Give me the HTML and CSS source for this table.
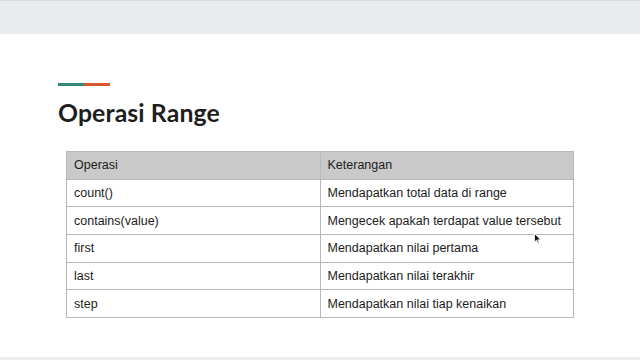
FILE: index.html
```html
<!DOCTYPE html>
<html>
<head>
<meta charset="utf-8">
<link rel="stylesheet" href="styles.css">
</head>
<body>
<div class="topbar"></div>
<main class="slide">
  <div class="accent"><span class="teal"></span><span class="orange"></span></div>
  <h1 class="title">Operasi Range</h1>
  <table class="ops">
    <thead>
      <tr><th>Operasi</th><th>Keterangan</th></tr>
    </thead>
    <tbody>
      <tr><td>count()</td><td>Mendapatkan total data di range</td></tr>
      <tr><td>contains(value)</td><td>Mengecek apakah terdapat value tersebut</td></tr>
      <tr><td>first</td><td>Mendapatkan nilai pertama</td></tr>
      <tr><td>last</td><td>Mendapatkan nilai terakhir</td></tr>
      <tr><td>step</td><td>Mendapatkan nilai tiap kenaikan</td></tr>
    </tbody>
  </table>
  <svg class="cursor" width="8" height="12" viewBox="0 0 8 12"><path d="M0.5 0.5 L0.5 9 L2.6 7.2 L4 10.6 L5.2 10.1 L3.8 6.8 L6.6 6.8 Z" fill="#111" stroke="#fff" stroke-width="0.8"/></svg>
</main>
<div class="bottombar"></div>
</body>
</html>
```
FILE: styles.css
```css
html, body {
  margin: 0;
  padding: 0;
  background: #ffffff;
  width: 640px;
  height: 360px;
  overflow: hidden;
}
body {
  display: flex;
  flex-direction: column;
  font-family: "Liberation Sans", Arial, sans-serif;
}
.topbar {
  height: 33px;
  background: #e8eaec;
  border-top: 1px solid #d9dbde;
}
.slide {
  position: relative;
  flex: 1;
  padding: 49px 0 0 58px;
}
.accent {
  display: flex;
  width: 52px;
  height: 3px;
}
.teal { flex: 1; background: #2f8a7a; }
.orange { flex: 1; background: #d9582b; }
.title {
  margin: 12px 0 0 0;
  font-family: Lato, "Open Sans", sans-serif;
  font-weight: 700;
  font-size: 24.8px;
  line-height: 30px;
  color: #1e1e1e;
  letter-spacing: 0.1px;
}
.ops {
  margin: 23px 0 0 8px;
  width: 508px;
  border-collapse: collapse;
  font-size: 12.5px;
  color: #1c1c1c;
}
.ops th, .ops td {
  width: 50%;
  text-align: left;
  font-weight: 400;
  border: 1px solid #b8b8b8;
  padding: 0 7px;
  height: 26.7px;
}
.ops th {
  background: #c9c9c9;
}
.cursor {
  position: absolute;
  left: 534px;
  top: 199px;
}
.bottombar {
  height: 3px;
  background: #eceef0;
}
```
